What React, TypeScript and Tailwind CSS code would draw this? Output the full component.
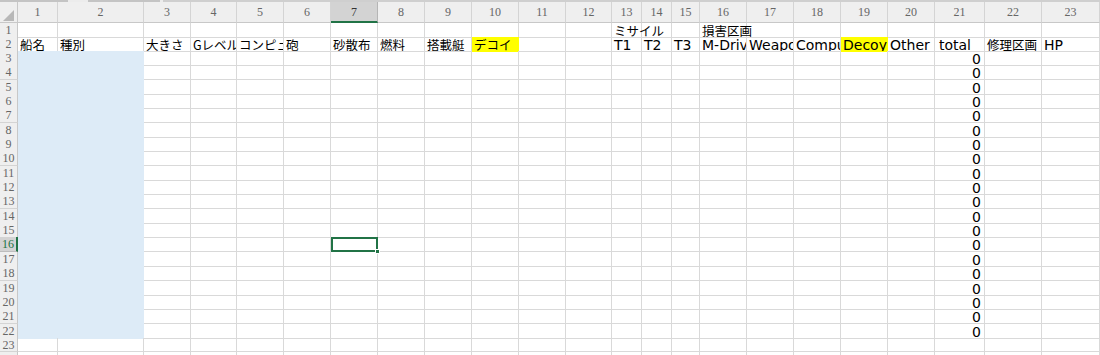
import React from "react";

// 列幅 (行見出し + 23列)
const gridCols =
  "grid grid-cols-[18px_40px_86px_47px_46px_47px_47px_47px_47px_47px_47px_47px_46px_30px_30px_28px_47px_47px_47px_47px_47px_50px_57px_58px]";

const cols = Array.from({ length: 23 }, (_, i) => i + 1);

// 行の高さ (行1〜24)
const rowHeights = [
  14, 14, 14, 15, 14, 14, 15, 14, 14, 15, 14, 14, 15, 14, 14, 15, 14, 15, 14, 14, 15, 14, 14, 14,
];
const hClass: Record<number, string> = { 14: "h-[14px]", 15: "h-[15px]" };

const cells: Record<number, Record<number, string>> = {
  1: { 13: "ミサイル", 16: "損害区画" },
  2: {
    1: "船名",
    2: "種別",
    3: "大きさ",
    4: "Gレベル",
    5: "コンピュータ",
    6: "砲",
    7: "砂散布",
    8: "燃料",
    9: "搭載艇",
    10: "デコイ",
    13: "T1",
    14: "T2",
    15: "T3",
    16: "M-Drive",
    17: "Weapon",
    18: "Computer",
    19: "Decoy",
    20: "Other",
    21: "total",
    22: "修理区画",
    23: "HP",
  },
};

const yellow = new Set(["2-10", "2-19"]);
const activeRow = 16;
const activeCol = 7;

const latin = "font-['DejaVu_Sans',sans-serif] text-[14px] leading-[14px]";
const jp = "font-['Noto_Sans_CJK_JP',sans-serif] text-[12.5px] leading-[14px]";

function Cell({ row, col }: { row: number; col: number }) {
  const text = cells[row]?.[col];
  const nextHas = !!cells[row]?.[col + 1];
  const isBlue = row >= 3 && row <= 22 && (col === 1 || col === 2);
  const isYellow = yellow.has(`${row}-${col}`);
  const isTotal = col === 21 && row >= 3 && row <= 22;
  const isActive = row === activeRow && col === activeCol;

  let fill = "border-[#d9d9d9]";
  if (isBlue) fill = "bg-[#ddebf7] border-[#ddebf7]";
  if (isYellow) fill = "bg-[#ffff00] border-[#ffff00]";

  let pad = "pl-[2px]";
  if (isTotal) pad = "justify-end pr-[3px]";
  if (row === 2 && col === 21) pad = "pl-[4px]";

  return (
    <div
      className={`relative flex items-end border-r border-b ${fill} ${
        nextHas ? "overflow-hidden" : "overflow-visible"
      } ${pad}`}
    >
      {text && (
        <span
          className={`whitespace-pre text-black translate-y-[1px] ${
            /^[\x00-\x7f]+$/.test(text) ? latin : jp
          }`}
        >
          {text}
        </span>
      )}
      {isTotal && <span className={`text-black translate-y-[1px] ${latin}`}>0</span>}
      {isActive && (
        <div className="absolute left-0 top-0 -right-px -bottom-px z-10 border-2 border-[#217346]">
          <div className="absolute -right-[4px] -bottom-[4px] w-[5px] h-[5px] bg-[#217346] border border-white" />
        </div>
      )}
    </div>
  );
}

export default function App() {
  return (
    <div className="w-[1100px] h-[355px] overflow-hidden bg-white">
      {/* 上端のタブ */}
      <div className="flex h-[2px] bg-[#cfcfcf]">
        <div className="w-[68px] bg-[#c4c4c4]" />
        <div className="w-[20px] bg-[#ececec]" />
        <div className="w-[72px] bg-[#c4c4c4]" />
        <div className="w-[3px] bg-[#ececec]" />
      </div>

      {/* 列見出し */}
      <div className={`${gridCols} h-[21px] bg-[#efefef] text-[#666] font-['Liberation_Serif',serif] text-[12px]`}>
        <div className="relative border-r border-b border-[#c8c8c8]">
          <svg className="absolute inset-0" width="18" height="21" viewBox="0 0 18 21">
            <polygon points="14,8 14,19 3,19" fill="#b8b8b8" />
          </svg>
        </div>
        {cols.map((c) => (
          <div
            key={c}
            className={`flex items-center justify-center border-r ${
              c === activeCol
                ? "bg-[#d3d3d3] border-[#b5b5b5] border-b-2 border-b-[#217346] text-[#333]"
                : "border-b border-[#d4d4d4] border-b-[#c8c8c8]"
            }`}
          >
            {c}
          </div>
        ))}
      </div>

      {/* 行 */}
      {rowHeights.map((h, i) => {
        const row = i + 1;
        return (
          <div key={row} className={`${gridCols} ${hClass[h]}`}>
            <div
              className={`flex items-center justify-center border-b font-['Liberation_Serif',serif] text-[12px] leading-none ${
                row === activeRow
                  ? "bg-[#d3d3d3] border-[#bdbdbd] border-r-2 border-r-[#217346] text-[#217346]"
                  : "bg-[#efefef] border-r border-[#d4d4d4] border-r-[#c8c8c8] text-[#666]"
              }`}
            >
              {row}
            </div>
            {cols.map((c) => (
              <Cell key={c} row={row} col={c} />
            ))}
          </div>
        );
      })}
    </div>
  );
}
